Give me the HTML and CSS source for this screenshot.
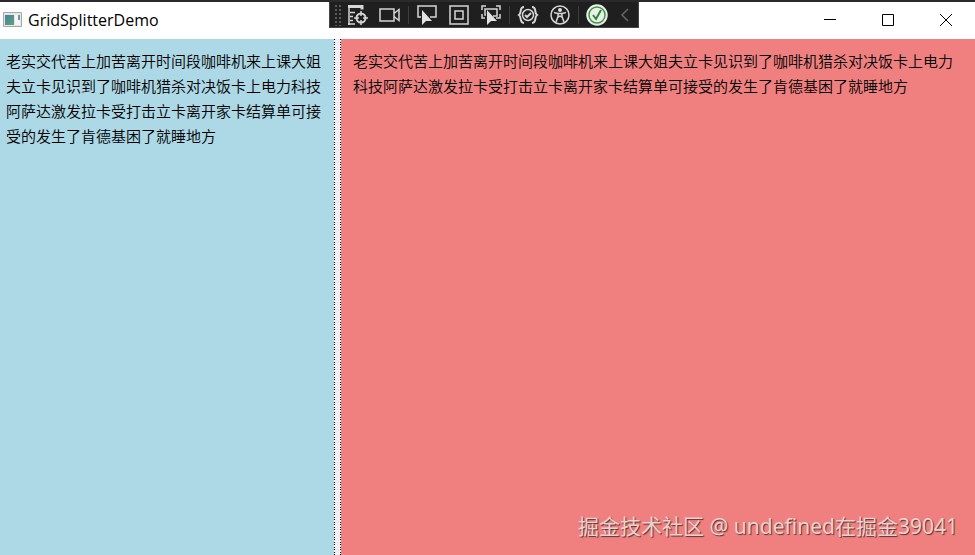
FILE: index.html
```html
<!DOCTYPE html>
<html lang="zh-CN">
<head>
<meta charset="utf-8">
<title>GridSplitterDemo</title>
<link rel="stylesheet" href="styles.css">
</head>
<body>
<div class="window">
  <header class="titlebar">
    <svg class="app-icon" width="20" height="15" viewBox="0 0 20 15" aria-hidden="true">
      <defs><linearGradient id="pane" x2="1" y2="1"><stop offset="0" stop-color="#4680a0"/><stop offset="1" stop-color="#5fa578"/></linearGradient></defs>
      <path d="M.5.5h18v14H.5z" fill="#e4e6e8" stroke="#a5a8ac"/>
      <path d="M2 3h9v10H2z" fill="url(#pane)"/>
      <path d="M12 3h5v10h-5z" fill="#f6f6f6"/>
      <path d="M16 3v5" stroke="#7094a5" stroke-width="2"/>
    </svg>
    <h1 class="title">GridSplitterDemo</h1>
    <div class="window-controls">
      <button class="control" aria-label="Minimize"><svg width="12" height="12"><path d="M0 5.500h12"/></svg></button>
      <button class="control" aria-label="Maximize"><svg width="12" height="12"><path d="M.5.5h11v11H.5z"/></svg></button>
      <button class="control" aria-label="Close"><svg width="12" height="12"><path d="M0 0l12 12M12 0L0 12"/></svg></button>
    </div>
  </header>
  <nav class="debug-bar" aria-label="Debug toolbar">
    <span class="grip"></span>
    <button class="tool" aria-label="Live Visual Tree"><svg width="22" height="22" viewBox="0 0 22 22"><path d="M1 2.500h14v3" stroke-width="3"/><path d="M2 1v20M3 8.500h5M3 12.500h3M3 16.500h3M1 20h7"/><circle cx="14" cy="14" r="4.500" stroke-width="2"/><path d="M14 7v5M14 16v5M7 14h5M16 14h5"/></svg></button>
    <button class="tool" aria-label="Record"><svg width="22" height="22" viewBox="0 0 22 22"><path d="M1 5h14v12H1zM15 9.500l5-4v11l-5-4"/></svg></button>
    <span class="divider"></span>
    <button class="tool" aria-label="Select element"><svg width="22" height="22" viewBox="0 0 22 22"><path d="M5 13H2V2h18v11h-6"/><path class="solid" d="M6 6v15l4-4h6z"/></svg></button>
    <button class="tool" aria-label="Layout adorners"><svg width="22" height="22" viewBox="0 0 22 22"><path d="M2 2h18v18H2zM7 7h8v8H7z"/></svg></button>
    <button class="tool" aria-label="Track focused element"><svg width="22" height="22" viewBox="0 0 22 22"><path d="M2 6V2h4M16 2h4v4M20 10v4h-4M2 10v4h3M6 11H5V5h12v7h-4"/><path class="solid" d="M7 6v15l4-4h6z"/></svg></button>
    <span class="divider"></span>
    <button class="tool" aria-label="Binding failures"><svg width="22" height="22" viewBox="0 0 22 22"><circle cx="11" cy="11" r="5.500"/><path d="M8 11l2 2 4-4M7 3C2 3 5 9 2 11c3 2 0 8 5 8M15 3c5 0 2 6 5 8-3 2 0 8-5 8" stroke-width="2"/></svg></button>
    <button class="tool" aria-label="Accessibility"><svg width="22" height="22" viewBox="0 0 22 22"><circle cx="11" cy="11" r="9"/><circle class="solid" cx="11" cy="6" r="2"/><path d="M5 8.500l4 1v3L7 18M17 8.500l-4 1v3l2 5.500M9 9.500h4M9 13l2-1 2 1"/></svg></button>
    <span class="divider"></span>
    <button class="tool" aria-label="Hot Reload"><svg width="22" height="22" viewBox="0 0 22 22"><circle cx="11" cy="11" r="10" fill="#eee" stroke="#eee"/><circle cx="11" cy="11" r="8" stroke="#399b40"/><path d="M7 11l3 4 5-9" stroke="#258c2c" stroke-width="2"/></svg></button>
    <button class="tool collapse" aria-label="Collapse"><svg width="22" height="22" viewBox="0 0 22 22"><path d="M14 5l-6 6 6 6"/></svg></button>
  </nav>
  <main class="panes">
    <section class="pane pane-left"><p>老实交代苦上加苦离开时间段咖啡机来上课大姐夫立卡见识到了咖啡机猎杀对决饭卡上电力科技阿萨达激发拉卡受打击立卡离开家卡结算单可接受的发生了肯德基困了就睡地方</p></section>
    <div class="splitter" role="separator" aria-orientation="vertical" tabindex="0"></div>
    <section class="pane pane-right"><p>老实交代苦上加苦离开时间段咖啡机来上课大姐夫立卡见识到了咖啡机猎杀对决饭卡上电力科技阿萨达激发拉卡受打击立卡离开家卡结算单可接受的发生了肯德基困了就睡地方</p></section>
  </main>
  <div class="watermark">掘金技术社区 @ undefined在掘金39041</div>
</div>
</body>
</html>
```
FILE: styles.css
```css
* { box-sizing: border-box; }

body {
  margin: 0;
  font-family: "Noto Sans", "Noto Sans CJK SC", sans-serif;
  color: #000;
}

.window {
  position: relative;
  display: flex;
  flex-direction: column;
  min-height: 100vh;
  border-top: 2px solid #2b2929;
  background: #fff;
}

.titlebar {
  display: flex;
  align-items: center;
  height: 37px;
  padding: 0 0 2px 3px;
}

.app-icon { flex: none; }

.title {
  margin: 0 0 0 5px;
  font-family: "Open Sans", sans-serif;
  font-size: 16px;
  font-weight: 400;
  line-height: 20px;
}

.window-controls {
  display: flex;
  margin-left: auto;
}

.control {
  display: grid;
  place-items: center;
  width: 58px;
  height: 35px;
  padding: 0;
  border: 0;
  background: none;
}

.control svg {
  fill: none;
  stroke: #000;
}

.debug-bar {
  position: absolute;
  top: 0;
  left: 50%;
  display: flex;
  align-items: center;
  width: 310px;
  height: 26px;
  margin-left: -159px;
  padding-left: 4px;
  border: 1px solid #454545;
  border-top: 0;
  background: #1f1f1f;
}

.grip {
  width: 8px;
  height: 22px;
  background: radial-gradient(circle, #5a5a5a 1px, transparent 1px) 0 0 / 4px 4px;
}

.tool {
  display: grid;
  flex: none;
  place-items: center;
  width: 32px;
  height: 24px;
  padding: 0;
  border: 0;
  background: none;
}

.tool svg {
  fill: none;
  stroke: #d6d6d6;
  stroke-width: 1.5;
}

.tool .solid {
  fill: #e2e2e2;
  stroke: none;
}

.tool.collapse { width: 24px; }
.collapse svg { stroke: #666; }

.divider {
  flex: none;
  width: 1px;
  height: 18px;
  margin: 0 2px;
  background: #3d3d3d;
}

.panes {
  display: grid;
  grid-template-columns: 334fr 7px 634fr;
  flex: 1;
}

.pane p {
  margin: 0;
  font-size: 15px;
  line-height: 25px;
  font-family: "Noto Sans CJK SC", sans-serif;
  font-weight: 350;
  word-break: break-all;
}

.pane-left {
  padding: 9px 6px;
  background: #add8e6;
}

.pane-right {
  padding: 9px 12px;
  background: #f08080;
}

.splitter {
  background:
    repeating-linear-gradient(#000 0 1px, #fff 1px 3px, #000 3px 4px, #fff 4px 5px) left / 1px 100% no-repeat,
    repeating-linear-gradient(#000 0 1px, #fff 1px 3px, #000 3px 4px, #fff 4px 5px) right / 1px 100% no-repeat,
    #f2eef5;
}

.watermark {
  position: absolute;
  right: 17px;
  bottom: 14px;
  font-size: 21px;
  line-height: 30px;
  color: #e6d3d0;
  text-shadow: 1px 1px 1px #5c3030;
}
```
